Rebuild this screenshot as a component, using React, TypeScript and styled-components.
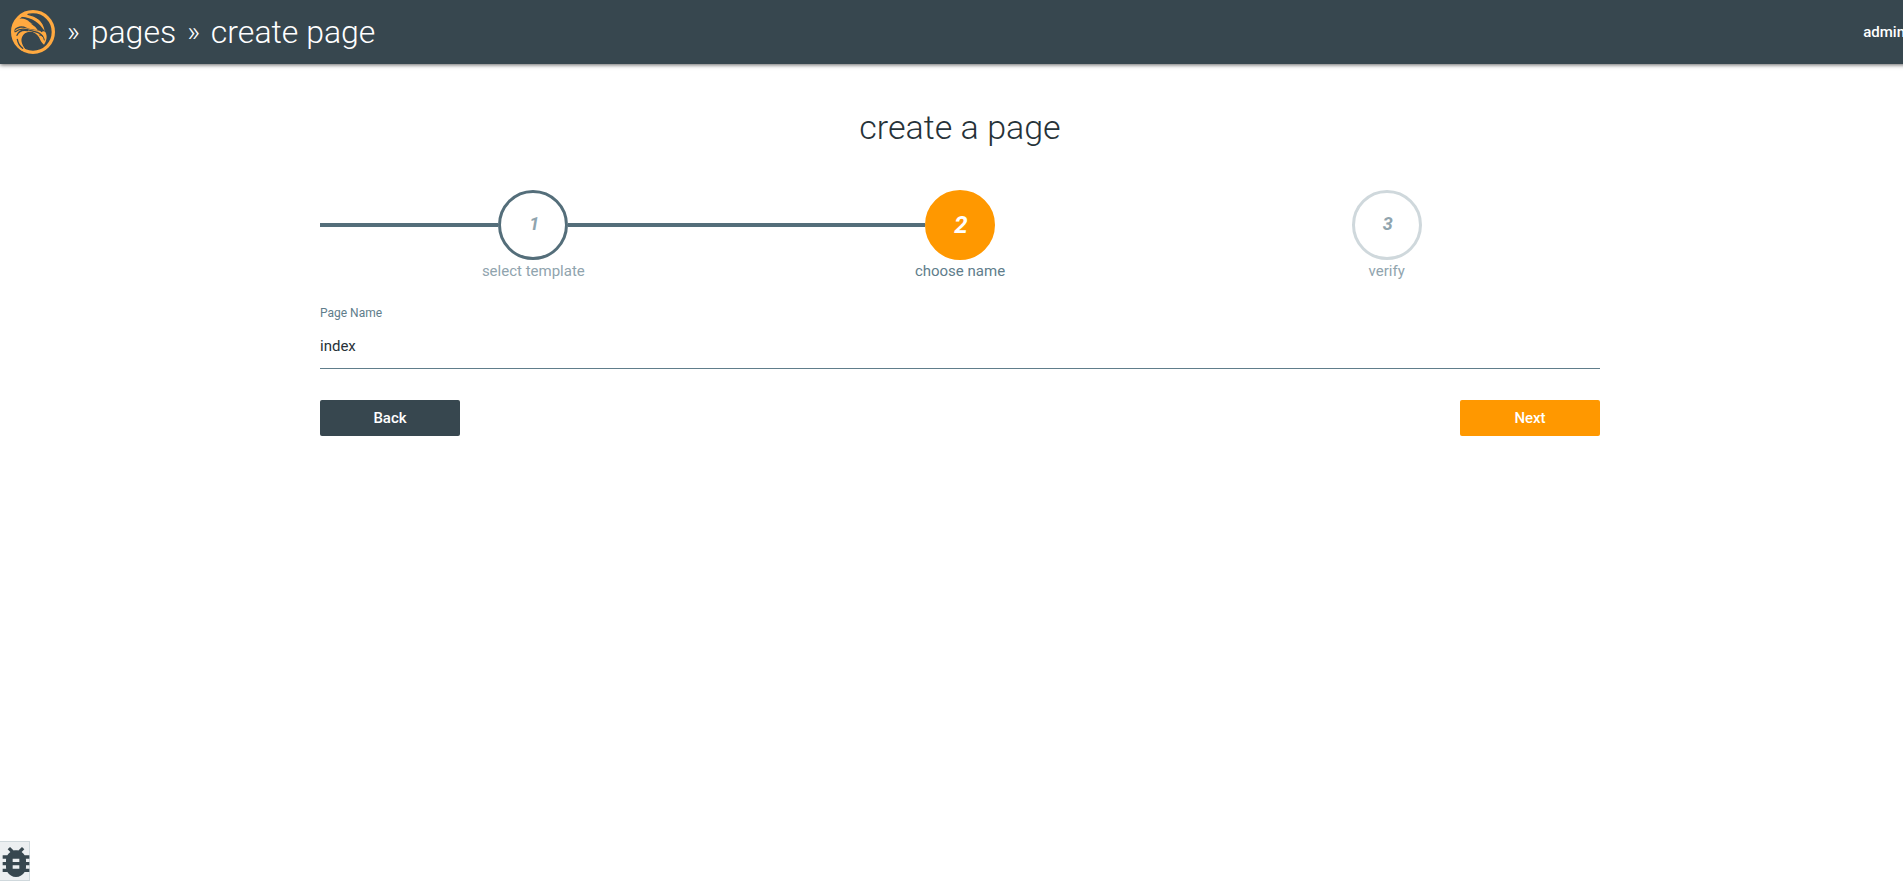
import React from "react";
import styled, { createGlobalStyle, css } from "styled-components";

const GlobalStyle = createGlobalStyle`
  *, *::before, *::after { box-sizing: border-box; }
  html { overflow-x: hidden; }
  body {
    margin: 0;
    overflow-x: hidden;
    background: #fff;
    color: #263238;
    font: 400 15px/20px Roboto, sans-serif;
  }
`;

const scrollbarGutter = 17;

const Page = styled.div`
  width: calc(100% + ${scrollbarGutter}px);
  min-height: 100vh;
`;

const Header = styled.header`
  display: flex;
  align-items: center;
  height: 64px;
  padding-left: 11px;
  background: #37474f;
  color: #fff;
  box-shadow: 0 1px 4px rgba(0, 0, 0, 0.6);
`;

const HomeLink = styled.a`
  display: flex;
  margin-right: 12px;
`;

const Crumbs = styled.nav`
  flex: 1;
  display: flex;
  gap: 11px;
  font-size: 32px;
  line-height: 40px;
  font-weight: 300;
`;

const Separator = styled.span`
  font-size: 28px;
`;

const CrumbLink = styled.a`
  color: inherit;
  text-decoration: none;
`;

const UserLink = styled.a`
  color: inherit;
  font-weight: 500;
  text-decoration: none;
  padding-right: 15px;
`;

const Content = styled.main`
  width: 67%;
  max-width: 1280px;
  margin: 0 auto;
`;

const Title = styled.h1`
  margin: 43px 0;
  font-size: 34px;
  line-height: 40px;
  font-weight: 300;
  text-align: center;
`;

const Steps = styled.ol`
  display: grid;
  grid-template-columns: repeat(3, 1fr);
  margin: 0;
  padding: 0;
  list-style: none;
`;

type State = "done" | "current" | "todo";

const Step = styled.li<{ $state: State }>`
  display: flex;
  flex-direction: column;
  align-items: center;
  line-height: 22px;
  color: ${(p) => (p.$state === "current" ? "#607d8b" : "#90a4ae")};
`;

const Track = styled.div`
  display: flex;
  align-items: center;
  align-self: stretch;
`;

const Rail = styled.span<{ $filled: boolean }>`
  flex: 1;
  height: 4px;
  background: ${(p) => (p.$filled ? "#546e7a" : "transparent")};
`;

const circle = {
  done: css`
    border-color: #546e7a;
  `,
  current: css`
    padding-bottom: 0;
    border-color: #ff9800;
    background: #ff9800;
    color: #fff;
    font-size: 24px;
  `,
  todo: css`
    border-color: #cfd8dc;
  `,
};

const Circle = styled.span<{ $state: State }>`
  display: flex;
  align-items: center;
  justify-content: center;
  width: 70px;
  height: 70px;
  padding: 0 0 2px 2px;
  border: 3px solid;
  border-radius: 50%;
  font-size: 18px;
  font-weight: 700;
  font-style: italic;
  ${(p) => circle[p.$state]}
`;

const Form = styled.form`
  margin-top: 21px;
`;

const Label = styled.label`
  display: block;
  font-size: 12px;
  line-height: 20px;
  color: #607d8b;
`;

const Input = styled.input`
  display: block;
  width: 100%;
  height: 46px;
  padding: 0;
  border: 0;
  border-bottom: 1px solid #607d8b;
  outline: 0;
  background: none;
  color: #263238;
  font: inherit;
`;

const Actions = styled.div`
  display: flex;
  justify-content: space-between;
  margin-top: 31px;
`;

const Button = styled.button<{ $primary?: boolean }>`
  width: 140px;
  height: 36px;
  border: 0;
  border-radius: 2px;
  background: ${(p) => (p.$primary ? "#ff9800" : "#37474f")};
  color: #fff;
  font: 500 15px/20px Roboto, sans-serif;
`;

const DebugButton = styled.button`
  position: fixed;
  left: 0;
  bottom: 3px;
  display: flex;
  align-items: center;
  justify-content: center;
  width: 30px;
  height: 40px;
  padding: 2px 0 0 3px;
  border: 1px solid #cfd8dc;
  border-left: 0;
  background: #eceff1;
  color: #37474f;

  svg { flex: none; }
`;

const Logo = () => (
  <svg width="44" height="44" viewBox="33 29 132 132" role="img" aria-label="Home">
    <circle cx="99" cy="95" r="61" fill="none" stroke="#ffa940" strokeWidth="10" />
    <g fill="#ffa940">
      <path d="M46 63C58 49 78 55 89 64L84 62L99 72L91 69L106 80L113 89C101 87 90 87 80 82C66 75 53 76 40 90C38 78 42 69 46 63Z" />
      <path d="M63 49L76 40C106 43 130 62 134 92C118 68 99 52 63 49Z" />
      <path d="M47 88C64 77 81 84 96 88C111 91 121 88 124 96C128 92 133 91 136 95C143 107 140 122 132 133C124 127 121 119 117 111C108 94 88 90 75 99C58 112 63 132 78 149L66 151C41 134 33 106 47 88Z" />
    </g>
    <g fill="none" stroke="#37474f" strokeLinecap="round">
      <path d="M84 42C108 47 127 57 138 82" strokeWidth="4" />
      <path d="M46 94C61 82 80 86 94 91C110 96 120 95 128 108" strokeWidth="4" />
      <path d="M51 105C57 92 70 88 83 91M52 117C54 129 60 138 68 144" strokeWidth="4" />
      <path d="M119 104Q130 103 133 119" strokeWidth="3" />
    </g>
  </svg>
);

const BugIcon = () => (
  <svg width="40" height="40" viewBox="0 0 24 24" fill="currentColor" aria-hidden="true">
    <path d="M20 8h-2.810c-.45-.78-1.070-1.450-1.820-1.960L17 4.410 15.590 3l-2.170 2.170C12.960 5.060 12.490 5 12 5s-.96.060-1.410.170L8.410 3 7 4.410l1.620 1.630C7.880 6.550 7.260 7.220 6.810 8H4v2h2.090c-.05.330-.09.660-.09 1v1H4v2h2v1c0 .34.040.67.090 1H4v2h2.810c1.040 1.790 2.970 3 5.190 3s4.150-1.210 5.190-3H20v-2h-2.090c.05-.33.090-.66.090-1v-1h2v-2h-2v-1c0-.34-.04-.67-.09-1H20V8zm-6 8h-4v-2h4v2zm0-4h-4v-2h4v2z" />
  </svg>
);

const steps: { name: string; state: State }[] = [
  { name: "select template", state: "done" },
  { name: "choose name", state: "current" },
  { name: "verify", state: "todo" },
];

export default function App() {
  return (
    <Page>
      <GlobalStyle />
      <Header>
        <HomeLink href="#"><Logo /></HomeLink>
        <Crumbs aria-label="Breadcrumb">
          <Separator>»</Separator>
          <CrumbLink href="#pages">pages</CrumbLink>
          <Separator>»</Separator>
          <CrumbLink href="#create">create page</CrumbLink>
        </Crumbs>
        <UserLink href="#account">admin</UserLink>
      </Header>
      <Content>
        <Title>create a page</Title>
        <Steps>
          {steps.map(({ name, state }, i) => (
            <Step key={name} $state={state}>
              <Track>
                <Rail $filled={state !== "todo"} />
                <Circle $state={state}>{i + 1}</Circle>
                <Rail $filled={state === "done"} />
              </Track>
              {name}
            </Step>
          ))}
        </Steps>
        <Form onSubmit={(e) => e.preventDefault()}>
          <Label htmlFor="page-name">Page Name</Label>
          <Input id="page-name" defaultValue="index" />
          <Actions>
            <Button type="button">Back</Button>
            <Button type="submit" $primary>Next</Button>
          </Actions>
        </Form>
      </Content>
      <DebugButton aria-label="Report a bug"><BugIcon /></DebugButton>
    </Page>
  );
}
